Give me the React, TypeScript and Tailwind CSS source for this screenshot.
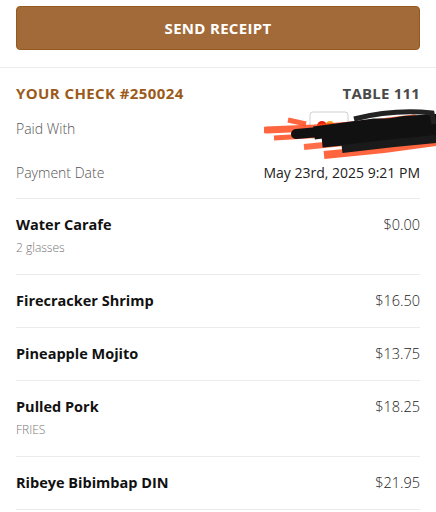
const font = { fontFamily: '"Open Sans", "Liberation Sans", sans-serif' };

type Item = { name: string; price: string; note?: string };

const items: Item[] = [
  { name: 'Water Carafe', price: '$0.00', note: '2 glasses' },
  { name: 'Firecracker Shrimp', price: '$16.50' },
  { name: 'Pineapple Mojito', price: '$13.75' },
  { name: 'Pulled Pork', price: '$18.25', note: 'FRIES' },
  { name: 'Ribeye Bibimbap DIN', price: '$21.95' },
];

// redacted card info, hand-scribbled over
const Scribble = () => (
  <svg className="absolute right-[-16px] top-[-10px]" width="172" height="52" viewBox="0 0 172 52">
    <rect x="46" y="4" width="38" height="26" rx="3" fill="none" stroke="#d0d0d0" strokeWidth="1" />
    <circle cx="58" cy="18" r="5" fill="#e8220e" />
    <circle cx="66" cy="17" r="4" fill="#f5a31a" />
    <path d="M2 22 L50 20 L100 16 L150 10" stroke="#ff4a1c" strokeWidth="7" strokeLinecap="round" fill="none" opacity="0.85" />
    <path d="M10 30 L60 27 L120 22 L172 16" stroke="#ff4a1c" strokeWidth="5" fill="none" opacity="0.85" />
    <path d="M24 12 L42 16" stroke="#ff4a1c" strokeWidth="5" fill="none" opacity="0.85" />
    <path d="M60 47 L120 41 L172 34" stroke="#ff4a1c" strokeWidth="8" fill="none" opacity="0.85" />
    <path d="M40 39 L100 33 L160 29" stroke="#ff4a1c" strokeWidth="6" fill="none" opacity="0.8" />
    <path d="M32 26 L90 21 L140 13 L172 11" stroke="#111" strokeWidth="10" strokeLinecap="round" fill="none" />
    <path d="M50 25 L110 17 L172 17" stroke="#111" strokeWidth="13" fill="none" />
    <path d="M58 33 L120 27 L172 25" stroke="#111" strokeWidth="13" fill="none" />
    <path d="M78 41 L130 35 L172 31" stroke="#1a1a1a" strokeWidth="8" fill="none" />
    <path d="M90 11 Q130 1 168 5 L170 16" stroke="#222" strokeWidth="5" fill="none" />
  </svg>
);

const App: React.FC = () => {
  return (
    <div className="w-[436px] min-h-[512px] bg-white" style={font}>
      <div className="pt-[6px] pb-[17px] px-4 border-b border-[#ececec]">
        <button className="w-full h-[44px] rounded-[4px] bg-[#a26a38] border border-[#94591f] text-white text-[15px] font-bold tracking-[0.3px]">
          SEND RECEIPT
        </button>
      </div>

      <div className="px-4">
        <div className="flex items-center justify-between h-[50px]">
          <span className="text-[15px] font-bold text-[#9b5a1a] tracking-[0.4px]">YOUR CHECK #250024</span>
          <span className="text-[15px] font-bold text-[#4a4a4a] tracking-[0.2px]">TABLE 111</span>
        </div>
        <div className="relative flex items-center justify-between h-[20px]">
          <span className="text-[14px] font-light text-[#555]">Paid With</span>
          <Scribble />
        </div>
        <div className="flex items-center justify-between h-[22px] mt-[23px]">
          <span className="text-[14px] font-light text-[#555]">Payment Date</span>
          <span className="text-[14px] text-[#222]">May 23rd, 2025 9:21 PM</span>
        </div>
        <div className="h-[16px] border-b border-[#ececec]" />

        {items.map((it) => (
          <div key={it.name} className={`border-b border-[#ececec] ${it.note ? 'h-[76px]' : 'h-[53px]'} pt-[16px]`}>
            <div className="flex items-center justify-between h-[20px]">
              <span className="text-[14.5px] font-bold text-[#111]">{it.name}</span>
              <span className="text-[14.5px] font-light text-[#222]">{it.price}</span>
            </div>
            {it.note && <div className="mt-[4px] text-[12px] font-light text-[#777]">{it.note}</div>}
          </div>
        ))}
      </div>
    </div>
  );
};

export default App;
